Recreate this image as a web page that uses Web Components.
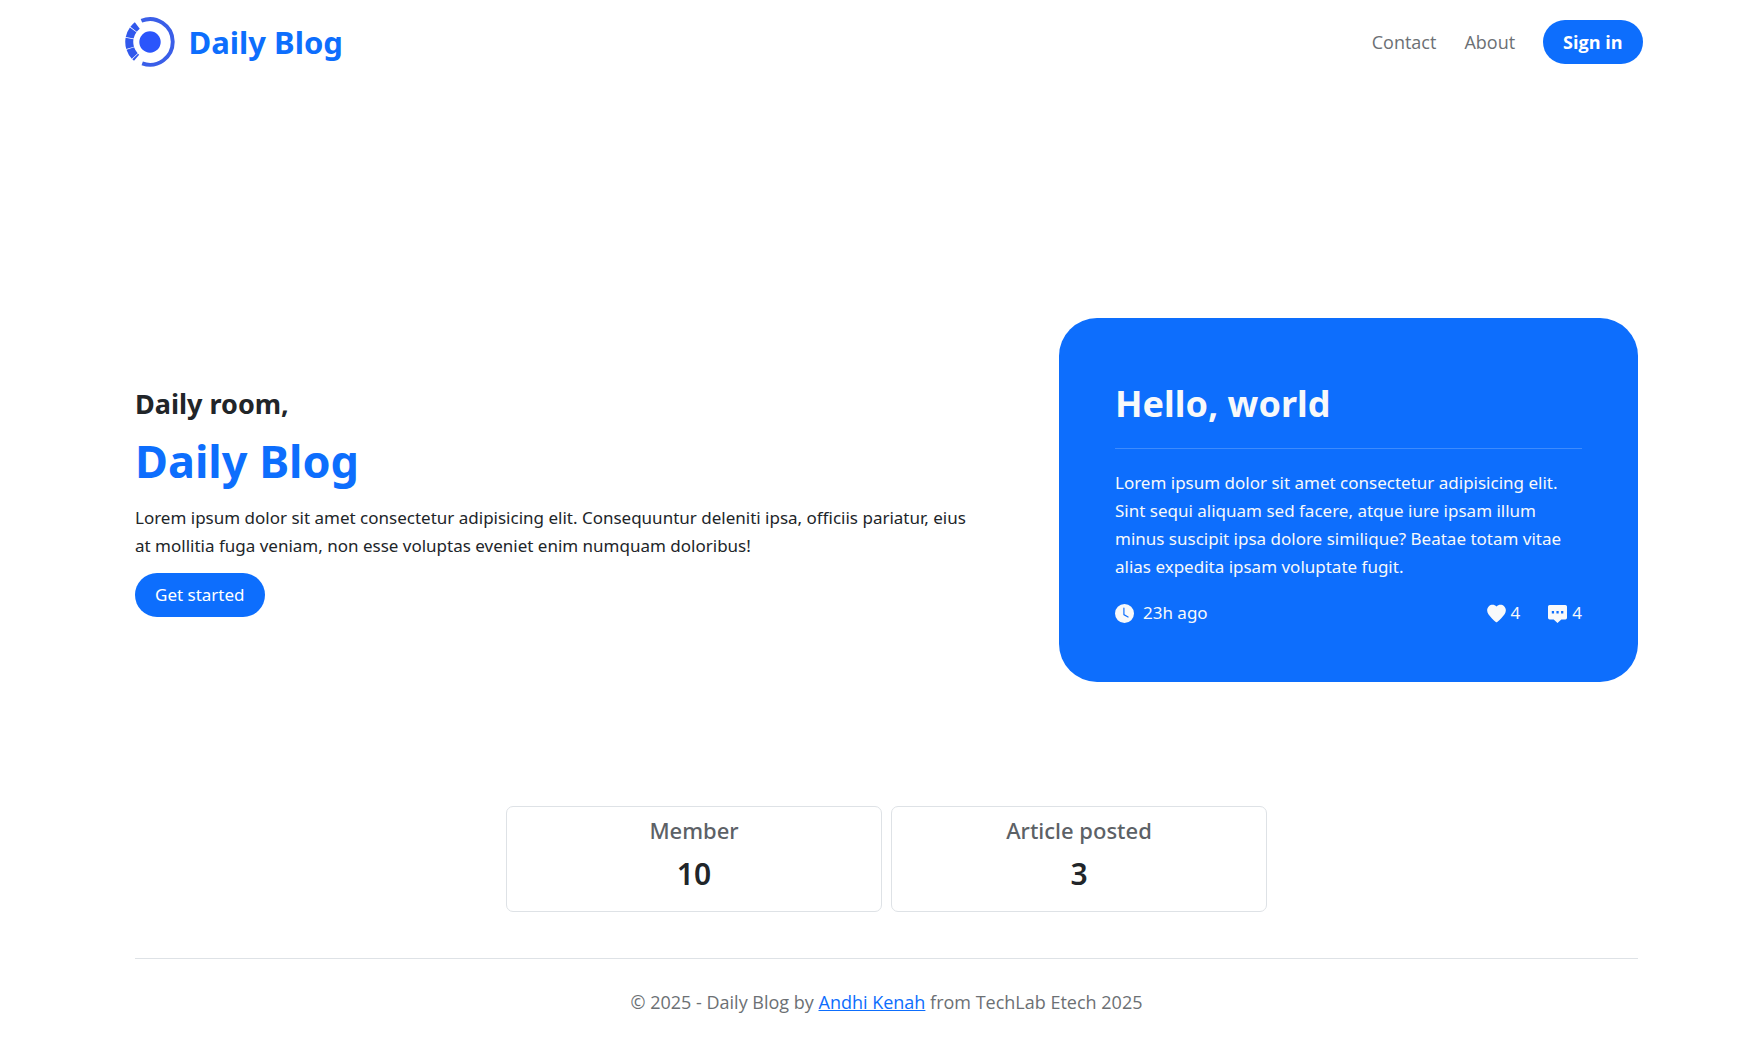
<!DOCTYPE html>
<html lang="en">
<head>
<meta charset="utf-8">
<title>Daily Blog</title>
<style>
  body { margin: 0; padding-left: 18px; background: #fff; color: #212529; font: 17px/28px "Noto Sans", "Open Sans", sans-serif; --blue: #0d6efd; --muted: #6c7074; }
</style>
</head>
<body>
<blog-page></blog-page>
<script>
const define = (name, html) => {
  const t = document.createElement('template');
  t.innerHTML = '<style>*{box-sizing:border-box}h1,h2,h3,p{margin:0}</style>' + html;
  customElements.define(name, class extends HTMLElement {
    constructor() { super(); this.attachShadow({ mode: 'open' }).append(t.content.cloneNode(true)); }
  });
};

define('blog-logo', `
<style>:host{display:block;width:50px;height:50px} svg{display:block}</style>
<svg width="50" height="50" viewBox="0 0 50 50" fill="none" aria-hidden="true">
  <circle cx="25" cy="25" r="10.7" fill="#2b55fb"/>
  <path d="M16.4 3.8A22.8 22.8 0 1 1 17.2 46.4" stroke="#3a5ee8" stroke-width="3.900"/>
  <path d="M12.3 8.5A20.8 20.8 0 0 0 11.6 40.8" stroke="#3158ec" stroke-width="8" stroke-dasharray="5.4 .7 8.6 .7 9.4 .7 8.6 .7 20"/>
</svg>`);

define('pill-button', `
<style>
  :host{display:inline-block}
  button{display:block;border:0;border-radius:22px;background:var(--blue);color:#fff;font:inherit;padding:8px 20px;height:44px;cursor:pointer}
</style>
<button type="button"><slot></slot></button>`);

define('site-header', `
<style>
  :host{display:block}
  header{display:flex;align-items:center;justify-content:space-between;max-width:1524px;height:83px;margin:0 auto;padding-right:6px}
  .brand{display:flex;align-items:center;gap:14px;color:var(--blue);text-decoration:none;font-size:31px;font-weight:700;line-height:40px}
  nav{display:flex;align-items:center;gap:28px;font-family:"Open Sans",sans-serif;font-size:18px}
  nav a{color:var(--muted);text-decoration:none}
  pill-button{font-weight:700}
</style>
<header>
  <a class="brand" href="#"><blog-logo></blog-logo><span>Daily Blog</span></a>
  <nav><a href="#contact">Contact</a><a href="#about">About</a><pill-button>Sign in</pill-button></nav>
</header>`);

define('hero-intro', `
<style>
  :host{display:block;padding:3px 24px 0 0}
  h2{font-size:27px;line-height:34px;font-weight:700}
  h1{font-size:45px;line-height:56px;font-weight:700;color:var(--blue);margin:12px 0 15px}
  pill-button{margin-top:13px}
</style>
<h2><slot name="kicker"></slot></h2>
<h1><slot name="title"></slot></h1>
<p><slot></slot></p>
<pill-button>Get started</pill-button>`);

define('post-card', `
<style>
  :host{display:block;background:var(--blue);color:#f8f9fa;border-radius:38px;padding:56px 56px 55px}
  h2{font-size:36px;line-height:60px;font-weight:700}
  hr{border:0;border-top:1px solid #3d8bfd;margin:14px 0 20px}
  .meta{display:flex;justify-content:space-between;margin-top:18px}
  .meta div,.meta span{display:flex;align-items:center}
  .meta div{gap:28px}.meta span{gap:5px}.meta .time{gap:9px}
  svg{display:block;width:19px;height:19px;fill:currentColor}
</style>
<h2><slot name="title"></slot></h2>
<hr>
<p><slot></slot></p>
<div class="meta">
  <span class="time"><svg viewBox="0 0 16 16"><path d="M16 8A8 8 0 1 1 0 8a8 8 0 0 1 16 0M8 3.5a.5.5 0 0 0-1 0V9a.5.5 0 0 0 .252.434l3.5 2a.5.5 0 0 0 .496-.868L8 8.71z"/></svg><slot name="time"></slot></span>
  <div>
    <span><svg viewBox="0 0 16 16"><path d="M8 2.1C9.6.2 12.6 0 14.4 1.8c1.9 1.9 1.9 4.7.4 6.8C13.3 10.9 10.4 13.6 8.600 15.2a.9.9 0 0 1-1.2 0C5.6 13.6 2.7 10.9 1.2 8.6-.3 6.5-.3 3.7 1.6 1.8 3.4 0 6.4.2 8 2.1"/></svg><slot name="likes"></slot></span>
    <span><svg viewBox="0 0 16 16"><path fill-rule="evenodd" d="M1.4.8h13.2A1.4 1.4 0 0 1 16 2.2v9.4a1.4 1.4 0 0 1-1.4 1.4h-3.4L8 16 4.8 13H1.4A1.4 1.4 0 0 1 0 11.6V2.2A1.4 1.4 0 0 1 1.4.8M3.2 5.9v2h1.9v-2zm3.9 0v2H9v-2zm3.9 0v2h1.9v-2z"/></svg><slot name="comments"></slot></span>
  </div>
</div>`);

define('stat-card', `
<style>
  :host{display:block;border:1px solid #dee2e6;border-radius:7px;padding:6px 8px 9px;text-align:center}
  h3{font-size:22px;line-height:34px;font-weight:500;color:#5c6166}
  p{font-size:30px;line-height:40px;font-weight:600;margin:7px 0 8px}
</style>
<h3><slot name="label"></slot></h3>
<p><slot></slot></p>`);

define('site-footer', `
<style>
  :host{display:block;border-top:1px solid #dee2e6;padding:29px 0 25px;text-align:center;color:var(--muted);font-family:"Open Sans",sans-serif;font-size:18px}
  a{color:var(--blue)}
</style>
<footer>© 2025 - Daily Blog by <a href="#author">Andhi Kenah</a> from TechLab Etech 2025</footer>`);

define('blog-page', `
<style>
  :host{display:block}
  main,site-footer{max-width:1503px;margin:0 auto}
  .hero{display:grid;grid-template-columns:minmax(0,868fr) minmax(0,579fr);column-gap:56px;align-items:center;padding:235px 0 124px}
  .stats{display:grid;grid-template-columns:1fr 1fr;gap:9px;max-width:761px;margin:0 auto 46px}
</style>
<site-header></site-header>
<main>
  <section class="hero">
    <hero-intro>
      <span slot="kicker">Daily room,</span><span slot="title">Daily Blog</span>
      Lorem ipsum dolor sit amet consectetur adipisicing elit. Consequuntur deleniti ipsa, officiis pariatur, eius at mollitia fuga veniam, non esse voluptas eveniet enim numquam doloribus!
    </hero-intro>
    <post-card>
      <span slot="title">Hello, world</span>
      Lorem ipsum dolor sit amet consectetur adipisicing elit. Sint sequi aliquam sed facere, atque iure ipsam illum minus suscipit ipsa dolore similique? Beatae totam vitae alias expedita ipsam voluptate fugit.
      <span slot="time">23h ago</span><span slot="likes">4</span><span slot="comments">4</span>
    </post-card>
  </section>
  <section class="stats">
    <stat-card><span slot="label">Member</span>10</stat-card>
    <stat-card><span slot="label">Article posted</span>3</stat-card>
  </section>
</main>
<site-footer></site-footer>`);
</script>
</body>
</html>
